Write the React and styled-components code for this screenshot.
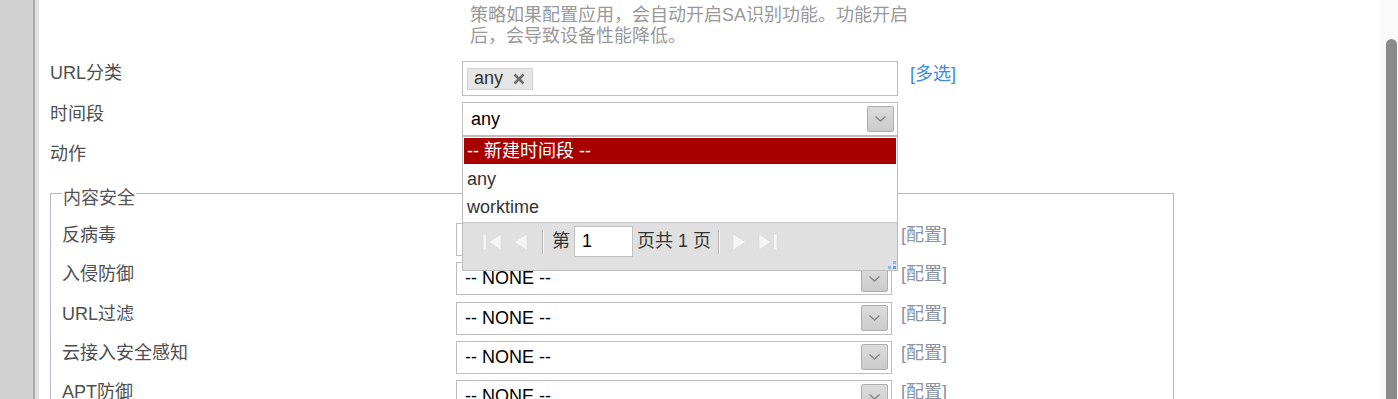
import React from 'react';
import styled, { createGlobalStyle } from 'styled-components';

const GlobalStyle = createGlobalStyle`
    html, body {
        margin: 0;
        padding: 0;
        overflow: hidden;
        background: #ffffff;
    }
    body {
        font-family: "Liberation Sans", "Noto Sans CJK SC", sans-serif;
        font-size: 18px;
    }
`;

const Page = styled.div`
    display: flex;
    height: 100vh;
    overflow: hidden;
`;

const Gutter = styled.div`
    width: 33px;
    flex-shrink: 0;
    background: #d1d1d1;
    border-right: 2px solid #a9a9a9;
`;

const Content = styled.div`
    flex: 1;
    border-left: 4px solid #e2e2e2;
    padding: 5px 0 0 11px;
    background: #ffffff;
`;

const ScrollTrack = styled.div`
    width: 18px;
    flex-shrink: 0;
    background: #fafafa;
    padding: 39px 1px 0 6px;
    box-sizing: border-box;
`;

const ScrollThumb = styled.div`
    height: 100%;
    background: #8b8b8b;
    border-radius: 6px 6px 0 0;
`;

const Hint = styled.div`
    margin-left: 420px;
    width: 440px;
    color: #999999;
    line-height: 21px;
    margin-bottom: 14px;
`;

const Row = styled.div`
    display: grid;
    grid-template-columns: ${p => p.$labelWidth}px 436px auto;
    align-items: start;
    min-height: ${p => p.$height}px;
    margin-bottom: ${p => p.$gap}px;
`;

const Label = styled.div`
    color: #4f4f4f;
    line-height: 22px;
    padding-top: 1px;
`;

const Box = styled.div`
    position: relative;
    box-sizing: border-box;
    height: ${p => p.$height}px;
    border: 1px solid #bdbdbd;
    background: #ffffff;
    display: flex;
    align-items: center;
    justify-content: space-between;
    padding: 0 3px 0 8px;
    color: #000000;
`;

const TagBox = styled(Box)`
    padding: 0 4px;
    justify-content: flex-start;
`;

const Tag = styled.span`
    display: inline-flex;
    align-items: center;
    height: 22px;
    box-sizing: border-box;
    padding: 0 7px 0 6px;
    background: #e6e6e6;
    border: 1px solid #d2d2d2;
    color: #333333;
`;

const TagClose = styled.span`
    margin-left: 10px;
    display: inline-flex;
`;

const ArrowButton = styled.span`
    width: 27px;
    height: 26px;
    box-sizing: border-box;
    border: 1px solid #aeaeae;
    border-radius: 2px;
    background: linear-gradient(#dcdcdc, #cbcbcb);
    display: flex;
    align-items: center;
    justify-content: center;
`;

const SideLink = styled.span`
    margin-left: ${p => p.$offset}px;
    line-height: 22px;
    margin-top: ${p => p.$top}px;
    color: ${p => (p.$blue ? '#3b8de0' : '#8a93a3')};
    white-space: nowrap;
`;

const Dropdown = styled.div`
    position: absolute;
    top: calc(100% + 1px);
    left: -1px;
    right: -1px;
    z-index: 20;
    border: 1px solid #bcbcbc;
    background: #ffffff;
`;

const OptionList = styled.div`
    padding: 1px 1px 0;
`;

const Option = styled.div`
    height: 26px;
    line-height: 26px;
    margin-bottom: 2px;
    padding-left: 3px;
    color: ${p => (p.$active ? '#ffffff' : '#333333')};
    background: ${p => (p.$active ? '#a80000' : 'transparent')};
`;

const Pager = styled.div`
    position: relative;
    height: 48px;
    box-sizing: border-box;
    border-top: 1px solid #c6c6c6;
    background: #e0e0e0;
    display: flex;
    align-items: flex-start;
    padding: 3px 0 0 18px;
    color: #333333;
`;

const PagerButton = styled.span`
    width: 22px;
    height: 31px;
    margin-left: ${p => p.$ml || 0}px;
    display: flex;
    align-items: center;
    justify-content: center;
`;

const PagerSep = styled.span`
    width: 1px;
    height: 24px;
    margin: 4px 0 0 ${p => p.$ml}px;
    background: #b4b4b4;
    border-right: 1px solid #f6f6f6;
`;

const PagerText = styled.span`
    line-height: 31px;
    margin-left: ${p => p.$ml}px;
    white-space: pre;
`;

const PageInput = styled.span`
    width: 59px;
    height: 31px;
    box-sizing: border-box;
    margin-left: 4px;
    border: 1px solid #c2c2c2;
    background: #ffffff;
    padding-left: 7px;
    line-height: 29px;
    color: #000000;
`;

const Grip = styled.svg`
    position: absolute;
    right: 1px;
    bottom: 1px;
`;

const Fieldset = styled.fieldset`
    width: 1124px;
    box-sizing: border-box;
    margin: 0;
    padding: 14px 0 0 11px;
    border: 1px solid #b8b5cc;
    min-width: 0;
`;

const Legend = styled.legend`
    padding: 10px 1px 0;
    line-height: 22px;
    color: #555555;
`;

const Chevron = () => (
    <svg width="13" height="8" viewBox="0 0 13 8">
        <path d="M1.5 1.5 L6.5 6 L11.5 1.5" fill="none" stroke="#858585" strokeWidth="1.4" />
    </svg>
);

const CloseIcon = () => (
    <svg width="12" height="12" viewBox="0 0 12 12">
        <path d="M1.5 1.5 L10.5 10.5 M10.5 1.5 L1.5 10.5" stroke="#707070" strokeWidth="2.6" />
    </svg>
);

const PagerIcon = ({ kind }) => {
    const fill = '#f5f5f5';
    const stroke = '#d6d6d6';
    if (kind === 'first') {
        return (
            <svg width="20" height="20" viewBox="0 0 20 20">
                <rect x="1" y="2" width="3.5" height="16" fill={fill} stroke={stroke} strokeWidth="0.6" />
                <path d="M19 2 L19 18 L7 10 Z" fill={fill} stroke={stroke} strokeWidth="0.6" />
            </svg>
        );
    }
    if (kind === 'prev') {
        return (
            <svg width="16" height="20" viewBox="0 0 16 20">
                <path d="M15 2 L15 18 L2 10 Z" fill={fill} stroke={stroke} strokeWidth="0.6" />
            </svg>
        );
    }
    if (kind === 'next') {
        return (
            <svg width="16" height="20" viewBox="0 0 16 20">
                <path d="M1 2 L1 18 L14 10 Z" fill={fill} stroke={stroke} strokeWidth="0.6" />
            </svg>
        );
    }
    return (
        <svg width="20" height="20" viewBox="0 0 20 20">
            <path d="M1 2 L1 18 L13 10 Z" fill={fill} stroke={stroke} strokeWidth="0.6" />
            <rect x="15.5" y="2" width="3.5" height="16" fill={fill} stroke={stroke} strokeWidth="0.6" />
        </svg>
    );
};

const Select = ({ value, height, children }) => (
    <Box $height={height}>
        <span>{value}</span>
        <ArrowButton>
            <Chevron />
        </ArrowButton>
        {children}
    </Box>
);

const timeOptions = ['-- 新建时间段 --', 'any', 'worktime'];

const securityRows = ['反病毒', '入侵防御', 'URL过滤', '云接入安全感知', 'APT防御'];

const App = () => {
    return (
        <>
            <GlobalStyle />
            <Page>
                <Gutter />
                <Content>
                    <Hint>
                        策略如果配置应用，会自动开启SA识别功能。功能开启后，会导致设备性能降低。
                    </Hint>

                    <Row $labelWidth={412} $height={35} $gap={6}>
                        <Label>URL分类</Label>
                        <TagBox $height={35}>
                            <Tag>
                                any
                                <TagClose><CloseIcon /></TagClose>
                            </Tag>
                        </TagBox>
                        <SideLink $blue $offset={12} $top={2}>[多选]</SideLink>
                    </Row>

                    <Row $labelWidth={412} $height={34} $gap={6}>
                        <Label>时间段</Label>
                        <Select value="any" height={34}>
                            <Dropdown>
                                <OptionList>
                                    {timeOptions.map((opt, i) => (
                                        <Option key={opt} $active={i === 0}>{opt}</Option>
                                    ))}
                                </OptionList>
                                <Pager>
                                    <PagerButton><PagerIcon kind="first" /></PagerButton>
                                    <PagerButton $ml={6}><PagerIcon kind="prev" /></PagerButton>
                                    <PagerSep $ml={11} />
                                    <PagerText $ml={8}>第</PagerText>
                                    <PageInput>1</PageInput>
                                    <PagerText $ml={4}>页共 1 页</PagerText>
                                    <PagerSep $ml={7} />
                                    <PagerButton $ml={9}><PagerIcon kind="next" /></PagerButton>
                                    <PagerButton $ml={6}><PagerIcon kind="last" /></PagerButton>
                                    <Grip width="8" height="8" viewBox="0 0 8 8">
                                        <rect x="5" y="0" width="3" height="3" fill="#8fb6ea" />
                                        <rect x="0" y="5" width="3" height="3" fill="#8fb6ea" />
                                        <rect x="5" y="5" width="3" height="3" fill="#6f9fe0" />
                                    </Grip>
                                </Pager>
                            </Dropdown>
                        </Select>
                    </Row>

                    <Row $labelWidth={412} $height={35} $gap={0}>
                        <Label>动作</Label>
                    </Row>

                    <Fieldset>
                        <Legend>内容安全</Legend>
                        {securityRows.map(name => (
                            <Row key={name} $labelWidth={394} $height={33} $gap={6.3}>
                                <Label>{name}</Label>
                                <Select value="-- NONE --" height={33} />
                                <SideLink $offset={9} $top={1}>[配置]</SideLink>
                            </Row>
                        ))}
                    </Fieldset>
                </Content>
                <ScrollTrack>
                    <ScrollThumb />
                </ScrollTrack>
            </Page>
        </>
    );
};

export default App;
